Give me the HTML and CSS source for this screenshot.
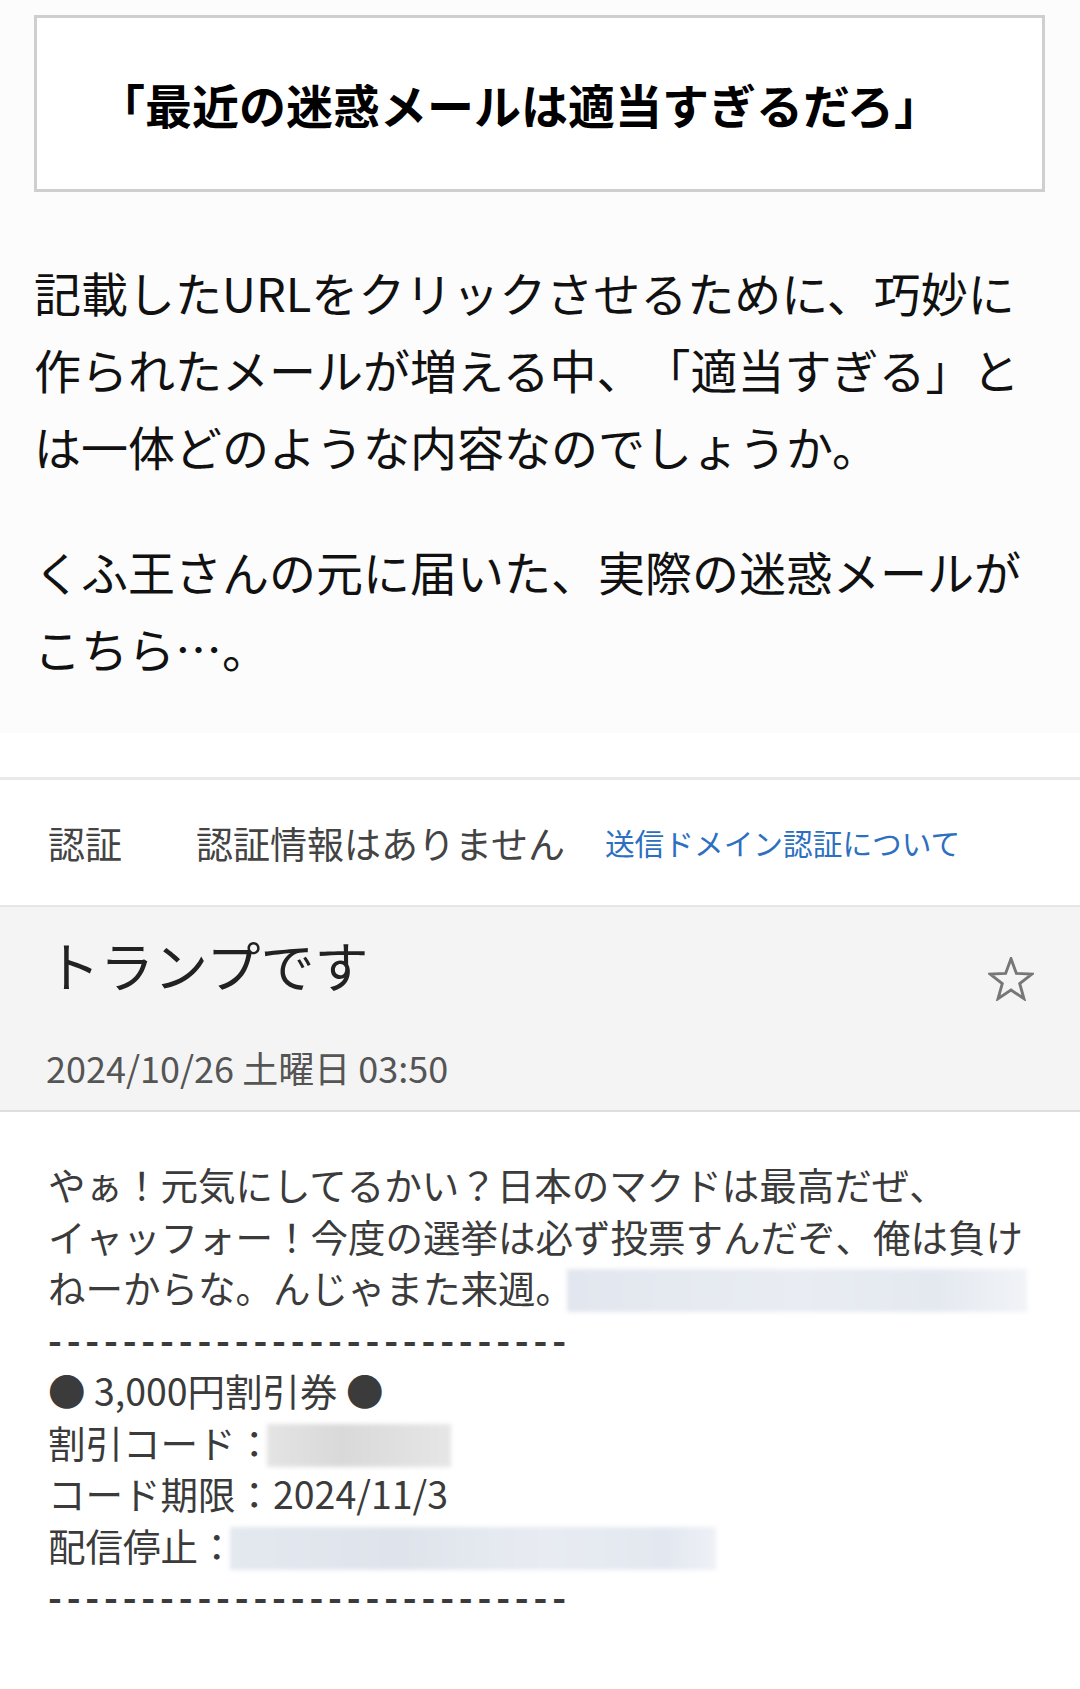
FILE: index.html
```html
<!DOCTYPE html>
<html lang="ja">
<head>
  <meta charset="UTF-8">
  <meta name="viewport" content="width=device-width, initial-scale=1.0">
  <title>最近の迷惑メールは適当すぎるだろ</title>
  <link rel="stylesheet" href="styles.css">
</head>
<body>
  <!-- 記事部分 -->
  <div class="article">
    <div class="headline">「最近の迷惑メールは適当すぎるだろ」</div>
    <p class="lead">記載したURLをクリックさせるために、巧妙に作られたメールが増える中、「適当すぎる」とは一体どのような内容なのでしょうか。</p>
    <p class="lead">くふ王さんの元に届いた、実際の迷惑メールがこちら…。</p>
  </div>

  <!-- メール画面 -->
  <div class="mail">
    <div class="auth">
      <span class="auth-label">認証</span>
      <span class="auth-value">認証情報はありません</span>
      <a class="auth-link" href="#">送信ドメイン認証について</a>
    </div>

    <div class="mail-head">
      <div class="subject-row">
        <h2 class="subject">トランプです</h2>
        <svg class="star" width="46" height="44" viewBox="0 0 50 48">
          <polygon points="25,2 30.88,17.91 47.83,18.58 34.51,29.09 39.11,45.42 25,36 10.89,45.42 15.49,29.09 2.17,18.58 19.12,17.91" />
        </svg>
      </div>
      <div class="date">2024/10/26 土曜日 03:50</div>
    </div>

    <div class="mail-body">
      <div class="line">やぁ！元気にしてるかい？日本のマクドは最高だぜ、</div>
      <div class="line">イャッフォー！今度の選挙は必ず投票すんだぞ、俺は負け</div>
      <div class="line">ねーからな。んじゃまた来週。<span class="masked masked-url"></span></div>
      <div class="line dash">----------------------------</div>
      <div class="line">● 3,000円割引券 ●</div>
      <div class="line">割引コード：<span class="masked masked-code"></span></div>
      <div class="line">コード期限：2024/11/3</div>
      <div class="line">配信停止：<span class="masked masked-stop"></span></div>
      <div class="line dash">----------------------------</div>
    </div>
  </div>
</body>
</html>
```

FILE: styles.css
```css
/* 全体 */
body {
  margin: 0;
  background: #ffffff;
  font-family: "Noto Sans CJK JP", "Noto Sans", sans-serif;
  color: #111;
}

/* 記事 */
.article {
  background: #fcfcfc;
  padding: 15px 46px 47px 34px;
}

.headline {
  height: 171px;
  margin-right: -11px;
  border: 3px solid #cfcfcf;
  background: #ffffff;
  display: flex;
  align-items: center;
  justify-content: center;
  padding-right: 40px;
  font-size: 47px;
  font-weight: bold;
  color: #000;
  margin-bottom: 61px;
}

.lead {
  margin: 0;
  font-size: 47px;
  line-height: 77px;
  text-spacing-trim: space-all;
}

.lead + .lead {
  margin-top: 48px;
}

/* メール画面 */
.mail {
  margin-top: 44px;
  border-top: 3px solid #e9e9e9;
}

.auth {
  height: 125px;
  display: flex;
  align-items: center;
  padding-left: 48px;
  border-bottom: 2px solid #e6e6e6;
  font-size: 37px;
  color: #444;
}

.auth-value {
  margin-left: 74px;
}

.auth-link {
  margin-left: 40px;
  font-size: 29.7px;
  color: #2d6fc0;
  text-decoration: none;
}

.mail-head {
  background: #f4f4f4;
  padding: 28px 46px 21px 46px;
  border-bottom: 2px solid #dedede;
}

.subject-row {
  height: 60px;
  display: flex;
  justify-content: space-between;
  align-items: flex-start;
}

.subject {
  margin: 0;
  font-size: 54px;
  line-height: 60px;
  font-weight: normal;
  color: #222;
}

.star {
  margin-top: 22px;
  fill: none;
  stroke: #777;
  stroke-width: 3.2;
}

.date {
  margin-top: 50px;
  font-size: 36px;
  line-height: 44px;
  color: #555;
}

.mail-body {
  padding: 46px 40px 60px 48px;
  font-size: 37.5px;
  line-height: 51.5px;
  color: #3b3b3b;
}

.line {
  white-space: nowrap;
}

.dash {
  letter-spacing: 4.8px;
  font-weight: bold;
}

/* 伏せ字 */
.masked {
  display: inline-block;
  height: 43px;
  margin-left: -6px;
  vertical-align: -9px;
  filter: blur(2px);
}

.masked-url {
  width: 460px;
  background: linear-gradient(90deg, #e2e6ee, #e9edf3 50%, #e4e9f0 80%, #f1f3f7);
}

.masked-code {
  width: 184px;
  background: linear-gradient(90deg, #e4e4e4, #d9d9d9 40%, #e6e6e6);
}

.masked-stop {
  width: 486px;
  background: linear-gradient(90deg, #e4e8ef, #dfe4ec 35%, #e8ecf2 65%, #e3e8f0 90%, #eef1f6);
}
```
